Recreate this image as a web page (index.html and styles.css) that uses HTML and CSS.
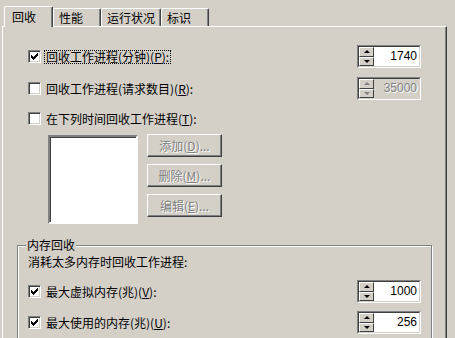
FILE: index.html
```html
<!DOCTYPE html>
<html lang="zh-CN">
<head>
  <meta charset="UTF-8">
  <meta name="viewport" content="width=device-width, initial-scale=1.0">
  <title>回收</title>
  <link rel="stylesheet" href="styles.css">
</head>

<body>

  <div class="dialog">
    <div class="tabs">
      <div class="tab active">回收</div>
      <div class="tab">性能</div>
      <div class="tab">运行状况</div>
      <div class="tab">标识</div>
    </div>

    <div class="panel">
      <div class="row">
        <label class="check">
          <span class="box"><svg width="7" height="7" viewBox="0 0 7 7"><polygon points="0,2 2,4 7,-1 7,2 2,7 0,5" fill="#000"/></svg></span>
          <span class="text focus">回收工作进程(分钟)(<u>P</u>):</span>
        </label>
        <div class="spin">
          <div class="spin-box">
            <div class="arrows"><span class="arrow up"></span><span class="arrow down"></span></div>
            <div class="value">1740</div>
          </div>
        </div>
      </div>

      <div class="row second">
        <label class="check">
          <span class="box"></span>
          <span class="text">回收工作进程(请求数目)(<u>R</u>):</span>
        </label>
        <div class="spin off">
          <div class="spin-box">
            <div class="arrows"><span class="arrow up"></span><span class="arrow down"></span></div>
            <div class="value">35000</div>
          </div>
        </div>
      </div>

      <div class="row third">
        <label class="check">
          <span class="box"></span>
          <span class="text">在下列时间回收工作进程(<u>T</u>):</span>
        </label>
      </div>

      <div class="list-row">
        <div class="listbox"></div>
        <div class="list-buttons">
          <button class="btn" disabled>添加(<u>D</u>)...</button>
          <button class="btn" disabled>删除(<u>M</u>)...</button>
          <button class="btn" disabled>编辑(<u>E</u>)...</button>
        </div>
      </div>

      <fieldset class="group">
        <legend>内存回收</legend>
        <div class="group-note">消耗太多内存时回收工作进程:</div>

        <div class="row mem-first">
          <label class="check">
            <span class="box"><svg width="7" height="7" viewBox="0 0 7 7"><polygon points="0,2 2,4 7,-1 7,2 2,7 0,5" fill="#000"/></svg></span>
            <span class="text">最大虚拟内存(兆)(<u>V</u>):</span>
          </label>
          <div class="spin">
            <div class="spin-box">
              <div class="arrows"><span class="arrow up"></span><span class="arrow down"></span></div>
              <div class="value">1000</div>
            </div>
          </div>
        </div>

        <div class="row mem-second">
          <label class="check">
            <span class="box"><svg width="7" height="7" viewBox="0 0 7 7"><polygon points="0,2 2,4 7,-1 7,2 2,7 0,5" fill="#000"/></svg></span>
            <span class="text">最大使用的内存(兆)(<u>U</u>):</span>
          </label>
          <div class="spin">
            <div class="spin-box">
              <div class="arrows"><span class="arrow up"></span><span class="arrow down"></span></div>
              <div class="value">256</div>
            </div>
          </div>
        </div>
      </fieldset>
    </div>
  </div>

</body>
</html>
```

FILE: styles.css
```css
:root {
  --face: #d4d0c8;
  --shadow: #808080;
  --dark: #404040;
  --light: #ffffff;
}

* {
  box-sizing: border-box;
}

body {
  margin: 0;
  background: var(--face);
  color: #000;
  font: 12px "Noto Sans CJK SC", "DejaVu Sans", sans-serif;
  overflow: hidden;
}

.dialog {
  width: 455px;
  height: 338px;
  overflow: hidden;
}

/* tab strip */
.tabs {
  display: flex;
  align-items: flex-end;
  height: 26px;
  padding-left: 4px;
}

.tab {
  display: flex;
  align-items: center;
  min-width: 48px;
  height: 18px;
  padding: 0 5px;
  line-height: 12px;
  border: 1px solid var(--light);
  border-bottom: 0;
  border-right-color: var(--dark);
  border-radius: 2px 2px 0 0;
  box-shadow: inset -1px 0 var(--shadow);
}

.tab.active {
  position: relative;
  z-index: 1;
  width: 49px;
  height: 21px;
  margin-bottom: -1px;
  padding-left: 7px;
  background: var(--face);
}

/* page body */
.panel {
  width: 445px;
  height: 312px;
  margin-left: 2px;
  padding: 18px 25px 0;
  border-top: 1px solid var(--light);
  border-left: 1px solid var(--light);
  border-right: 1px solid var(--dark);
  box-shadow: inset -1px 0 var(--shadow);
}

.row {
  display: flex;
  align-items: center;
  justify-content: space-between;
  height: 23px;
}

.row.second {
  margin-top: 9px;
}

.row.third {
  margin-top: 7px;
}

.check {
  display: flex;
  align-items: center;
}

.box {
  display: flex;
  align-items: center;
  justify-content: center;
  width: 13px;
  height: 13px;
  margin-right: 3px;
  background: #fff;
  border: 1px solid;
  border-color: var(--shadow) var(--light) var(--light) var(--shadow);
  box-shadow: inset 1px 1px var(--dark), inset -1px -1px var(--face);
}

.box svg {
  display: block;
  shape-rendering: crispEdges;
}

.text {
  padding: 0 1px;
  line-height: 12px;
  border: 1px dotted transparent;
}

.text.focus {
  border-color: #000;
}

/* spinners */
.spin {
  width: 64px;
  height: 23px;
  border: 1px solid;
  border-color: var(--shadow) var(--light) var(--light) var(--shadow);
}

.spin-box {
  display: flex;
  height: 100%;
  border: 1px solid;
  border-color: var(--dark) var(--face) var(--face) var(--dark);
}

.arrows {
  display: flex;
  flex-direction: column;
  width: 15px;
}

.arrow {
  flex: 1;
  display: flex;
  align-items: center;
  justify-content: center;
  border: 1px solid;
  border-color: var(--light) var(--dark) var(--dark) var(--light);
}

.arrow::before {
  content: "";
  border-left: 3px solid transparent;
  border-right: 3px solid transparent;
}

.arrow.up::before {
  border-bottom: 3px solid #000;
}

.arrow.down::before {
  border-top: 3px solid #000;
}

.value {
  flex: 1;
  padding-right: 2px;
  background: #fff;
  text-align: right;
  font-family: "Liberation Sans", sans-serif;
  font-size: 12px;
  line-height: 19px;
}

.spin.off .value {
  background: var(--face);
  color: var(--shadow);
  text-shadow: 1px 1px 0 var(--light);
}

.spin.off .arrow.up::before {
  border-bottom-color: var(--shadow);
}

.spin.off .arrow.down::before {
  border-top-color: var(--shadow);
}

/* schedule list */
.list-row {
  display: flex;
  gap: 9px;
  margin: 4px 0 0 20px;
}

.listbox {
  width: 90px;
  height: 89px;
  margin-top: 1px;
  background: #fff;
  border: 2px solid;
  border-color: var(--shadow) var(--light) var(--light) var(--shadow);
  box-shadow: inset 1px 1px var(--dark);
}

.list-buttons {
  display: flex;
  flex-direction: column;
  gap: 7px;
}

.btn {
  width: 75px;
  height: 23px;
  padding: 0;
  background: var(--face);
  border: 1px solid;
  border-color: var(--light) var(--dark) var(--dark) var(--light);
  box-shadow: inset -1px -1px var(--shadow);
  font: inherit;
  color: var(--shadow);
  text-shadow: 1px 1px 0 var(--light);
}

/* memory group */
.group {
  margin: 14px -11px 0;
  padding: 0 10px 10px;
  border: 1px solid var(--shadow);
  box-shadow: inset 1px 1px var(--light), 1px 1px var(--light);
}

.group legend {
  margin-left: -2px;
  padding: 0 1px;
  line-height: 14px;
  background: var(--face);
}

.group-note {
  margin-top: 3px;
  line-height: 14px;
}

.row.mem-first {
  margin-top: 11px;
}

.row.mem-second {
  margin-top: 8px;
}
```
